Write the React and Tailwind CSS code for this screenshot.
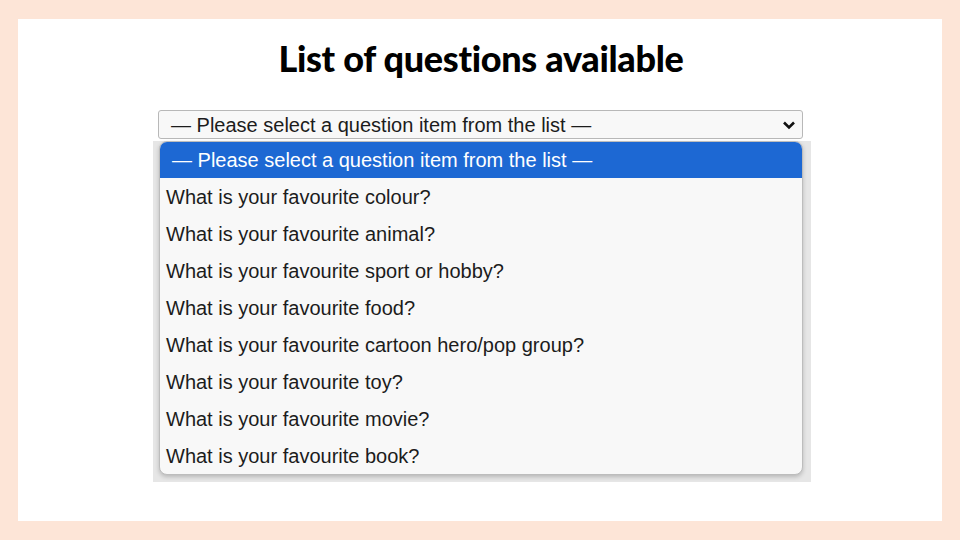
const QUESTIONS = [
  "What is your favourite colour?",
  "What is your favourite animal?",
  "What is your favourite sport or hobby?",
  "What is your favourite food?",
  "What is your favourite cartoon hero/pop group?",
  "What is your favourite toy?",
  "What is your favourite movie?",
  "What is your favourite book?",
];

const PLACEHOLDER = "— Please select a question item from the list —";

export default function App() {
  return (
    <div className="w-[960px] h-[540px] bg-[#fde5d7] p-[18px] pt-[19px] overflow-hidden">
      <div className="w-[924px] h-[502px] bg-white flex flex-col items-center">
        <h1 className="mt-[17px] ml-[2px] h-[44px] text-[36px] leading-[44px] font-black text-black tracking-[-0.3px] font-['Lato',sans-serif]">
          List of questions available
        </h1>

        {/* screenshot of the form with the open select */}
        <div className="mt-[30px] w-[658px] ml-[4px] flex flex-col font-['Liberation_Sans',Arial,sans-serif]">
          <div className="ml-[5px] w-[645px] h-[29px] border border-[#b8b8b8] rounded-[3px] bg-[#f8f8f8] flex items-center justify-between pl-[12px] pr-[6px] text-[20px] text-[#1c1c1c]">
            <span>{PLACEHOLDER}</span>
            <svg width="14" height="10" viewBox="0 0 14 10">
              <path d="M2 2.5 L7 7.5 L12 2.5" fill="none" stroke="#111" strokeWidth="2.6" />
            </svg>
          </div>

          <div className="mt-[2px] bg-[#e6e6e6] pr-[8px] pb-[7px] pl-[6px] flex flex-col">
            <div className="w-[644px] rounded-[8px] bg-[#f8f8f8] border border-[#bdbdbd] shadow-[0_2px_4px_rgba(0,0,0,0.2)] overflow-hidden text-[20px] text-[#1c1c1c]">
              <div className="h-[36px] bg-[#1d68d3] text-white flex items-center pl-[12px]">{PLACEHOLDER}</div>
              {QUESTIONS.map((q) => (
                <div key={q} className="h-[37px] flex items-center pl-[6px]">
                  {q}
                </div>
              ))}
            </div>
          </div>
        </div>
      </div>
    </div>
  );
}
